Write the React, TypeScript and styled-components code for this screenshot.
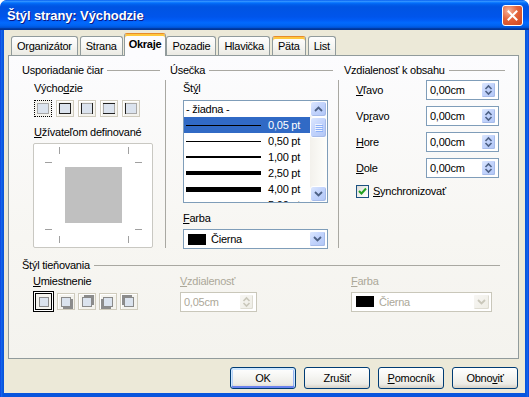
import React from "react";
import styled, { createGlobalStyle, css } from "styled-components";

const Global = createGlobalStyle`
  html, body { margin: 0; padding: 0; background: #ffffff; }
  body { font-family: "Liberation Sans", Arial, sans-serif; font-size: 11px; color: #000; letter-spacing: -0.25px; }
  * { box-sizing: border-box; }
`;

const Window = styled.div`
  width: 529px;
  height: 397px;
  display: flex;
  flex-direction: column;
  background: linear-gradient(to right, #0831d9 0, #166aee 1px, #0855dd 3px, #0855dd calc(100% - 3px), #166aee calc(100% - 1px), #0831d9 100%);
  border-radius: 7px 7px 0 0;
  overflow: hidden;
`;

const TitleBar = styled.div`
  height: 30px;
  flex: none;
  display: flex;
  align-items: center;
  justify-content: space-between;
  padding: 0 6px 0 7px;
  background: linear-gradient(to bottom, #0058ee 0%, #3593ff 4%, #288eff 6%, #127dff 8%, #036ffc 10%, #0262ee 14%, #0057e5 20%, #0054e3 24%, #0055eb 56%, #005bf5 66%, #026afe 76%, #0062ef 86%, #0052d6 92%, #0040ab 94%, #003092 100%);
  border-radius: 7px 7px 0 0;
`;

const Title = styled.div`
  color: #fff;
  font: bold 13px "Liberation Sans", Arial, sans-serif;
  text-shadow: 1px 1px 0 #0a1883;
  letter-spacing: -0.1px;
`;

const CloseButton = styled.div`
  width: 21px;
  height: 21px;
  border: 1px solid #fff;
  border-radius: 3px;
  background: radial-gradient(circle at 30% 25%, #f7b39a 0%, #e4633a 45%, #cc4520 100%);
  display: flex;
  align-items: center;
  justify-content: center;
`;

const Client = styled.div`
  flex: 1;
  margin: 0 4px 4px 4px;
  background: #ece9d8;
  display: flex;
  flex-direction: column;
  padding: 3px 0 0 4px;
`;

const TabStrip = styled.div`
  height: 22px;
  display: flex;
  align-items: flex-end;
  padding-left: 3px;
  position: relative;
  z-index: 1;
`;

const Tab = styled.div<{ $selected?: boolean; $hot?: boolean }>`
  height: 19px;
  padding: 0 5px 0 5px;
  display: flex;
  align-items: center;
  border: 1px solid #919b9c;
  border-bottom: none;
  border-radius: 3px 3px 0 0;
  margin-right: 2px;
  background: linear-gradient(to bottom, #fefefe 0%, #f6f6f3 50%, #ebeae3 100%);
  white-space: nowrap;
  ${(p) =>
    p.$hot &&
    css`
      border-top-color: #e68b2c;
      box-shadow: inset 0 2px 0 #ffc73c;
    `}
  ${(p) =>
    p.$selected &&
    css`
      height: 23px;
      margin-bottom: -1px;
      margin-left: -1px;
      margin-right: 0;
      font-weight: bold;
      padding: 0 4px 2px 4px;
      background: #fcfcfe;
      border-top-color: #e68b2c;
      box-shadow: inset 0 2px 0 #ffc73c;
    `}
`;

const Panel = styled.div`
  width: 511px;
  height: 304px;
  flex: none;
  border: 1px solid #919b9c;
  background: linear-gradient(to bottom, #fcfcfe 0%, #f7f6f2 60%, #f4f3ee 100%);
  padding: 8px 0 0 13px;
  display: flex;
  flex-direction: column;
`;

const TopRow = styled.div`
  display: flex;
  height: 185px;
`;

const Column = styled.div<{ $w: number; $ml?: number }>`
  width: ${(p) => p.$w}px;
  margin-left: ${(p) => p.$ml ?? 0}px;
  display: flex;
  flex-direction: column;
`;

const VSep = styled.div<{ $ml: number }>`
  width: 1px;
  height: 168px;
  margin-top: 16px;
  margin-left: ${(p) => p.$ml}px;
  background: #a9a8a2;
`;

const GroupHeader = styled.div`
  height: 13px;
  display: flex;
  align-items: center;
  gap: 4px;
  line-height: 13px;
  white-space: nowrap;
`;

const Rule = styled.div`
  flex: 1;
  height: 1px;
  background: #a9a8a2;
`;

const GroupBody = styled.div<{ $pl: number }>`
  display: flex;
  flex-direction: column;
  padding-left: ${(p) => p.$pl}px;
`;

const Label = styled.div<{ $mt?: number; $disabled?: boolean }>`
  line-height: 13px;
  height: 13px;
  margin-top: ${(p) => p.$mt ?? 0}px;
  white-space: nowrap;
  color: ${(p) => (p.$disabled ? "#aca899" : "#000")};
`;

const Key = styled.span`
  text-decoration: underline;
  text-underline-offset: 1px;
`;

const PresetRow = styled.div<{ $mt: number }>`
  display: flex;
  align-items: center;
  gap: 4px;
  margin-top: ${(p) => p.$mt}px;
`;

const PresetButton = styled.div<{ $focus?: boolean; $selected?: boolean }>`
  width: 18px;
  height: 17px;
  display: flex;
  align-items: center;
  justify-content: center;
  border: 1px solid #cfcbbd;
  box-shadow: inset 1px 1px 0 #ffffff;
  background: #f4f3ee;
  ${(p) =>
    p.$focus &&
    css`
      border: 1px dotted #000;
      box-shadow: none;
    `}
  ${(p) =>
    p.$selected &&
    css`
      width: 21px;
      height: 21px;
      border: 1px solid #000;
      box-shadow: inset 0 0 0 1px #fff, inset 0 0 0 2px #000;
    `}
`;

const PreviewBox = styled.div`
  width: 120px;
  height: 105px;
  margin: 4px 0 0 -1px;
  background: #fff;
  border: 1px solid #c9c8c2;
  border-radius: 2px;
`;

const ListBox = styled.div`
  width: 145px;
  height: 103px;
  margin-top: 5px;
  border: 1px solid #7f9db9;
  background: #fff;
  display: flex;
  overflow: hidden;
`;

const ListRows = styled.div`
  flex: 1;
  min-width: 0;
  display: flex;
  flex-direction: column;
  overflow: hidden;
`;

const ListRow = styled.div<{ $selected?: boolean }>`
  height: 16px;
  flex: none;
  display: flex;
  align-items: center;
  gap: 7px;
  padding: 0 10px 0 2px;
  white-space: nowrap;
  background: ${(p) => (p.$selected ? "#316ac5" : "transparent")};
  color: ${(p) => (p.$selected ? "#fff" : "#000")};
`;

const LineSample = styled.div<{ $t: number }>`
  flex: 1;
  height: ${(p) => p.$t}px;
  background: #000;
`;

const ScrollBar = styled.div`
  width: 17px;
  flex: none;
  display: flex;
  flex-direction: column;
  background: linear-gradient(to right, #f3f1ec, #fefefb);
`;

const ScrollButton = styled.div<{ $h: number; $mt?: number }>`
  height: ${(p) => p.$h}px;
  margin-top: ${(p) => p.$mt ?? 0}px;
  flex: none;
  border: 1px solid #fff;
  border-radius: 3px;
  background: linear-gradient(135deg, #dce7fe 0%, #c3d4fc 45%, #b1c6f6 100%);
  box-shadow: inset -1px -1px 0 #a6bbe9;
  display: flex;
  align-items: center;
  justify-content: center;
`;

const SelectBox = styled.div<{ $w: number; $mt?: number; $disabled?: boolean }>`
  width: ${(p) => p.$w}px;
  height: 20px;
  margin-top: ${(p) => p.$mt ?? 0}px;
  border: 1px solid ${(p) => (p.$disabled ? "#c9c7ba" : "#7f9db9")};
  background: #fff;
  display: flex;
  align-items: center;
  padding: 1px;
  color: ${(p) => (p.$disabled ? "#aca899" : "#000")};
`;

const Swatch = styled.div`
  width: 18px;
  height: 11px;
  background: #000;
  margin: 0 5px 0 3px;
  flex: none;
`;

const SelectText = styled.div`
  flex: 1;
  white-space: nowrap;
`;

const DropButton = styled.div<{ $disabled?: boolean }>`
  width: 17px;
  height: 16px;
  flex: none;
  border: 1px solid #fff;
  border-radius: 2px;
  display: flex;
  align-items: center;
  justify-content: center;
  background: ${(p) =>
    p.$disabled
      ? "linear-gradient(135deg, #f7f6f3, #eeede5)"
      : "linear-gradient(135deg, #dce7fe 0%, #c3d4fc 45%, #b1c6f6 100%)"};
  box-shadow: inset -1px -1px 0 ${(p) => (p.$disabled ? "#dedcd2" : "#a6bbe9")};
`;

const SpinRow = styled.div<{ $mt: number }>`
  display: flex;
  align-items: center;
  height: 20px;
  margin-top: ${(p) => p.$mt}px;
`;

const SpinLabel = styled.div`
  width: 70px;
  line-height: 13px;
  white-space: nowrap;
`;

const SpinField = styled.div<{ $w: number; $disabled?: boolean }>`
  width: ${(p) => p.$w}px;
  height: 20px;
  border: 1px solid ${(p) => (p.$disabled ? "#c9c7ba" : "#7f9db9")};
  background: #fff;
  display: flex;
  align-items: center;
  padding: 1px 2px 1px 3px;
  color: ${(p) => (p.$disabled ? "#aca899" : "#000")};
`;

const SpinText = styled.div`
  flex: 1;
  white-space: nowrap;
`;

const SpinButtons = styled.div<{ $disabled?: boolean }>`
  width: 15px;
  height: 16px;
  border: 1px solid #fff;
  border-radius: 2px;
  display: flex;
  align-items: center;
  justify-content: center;
  background: ${(p) =>
    p.$disabled
      ? "linear-gradient(135deg, #f7f6f3, #eeede5)"
      : "linear-gradient(135deg, #dce7fe 0%, #c3d4fc 45%, #b1c6f6 100%)"};
  box-shadow: inset -1px -1px 0 ${(p) => (p.$disabled ? "#dedcd2" : "#a6bbe9")};
`;

const CheckRow = styled.div`
  display: flex;
  align-items: center;
  gap: 4px;
  margin-top: 7px;
  height: 13px;
  line-height: 13px;
`;

const CheckBox = styled.div`
  width: 13px;
  height: 13px;
  border: 1px solid #1c5180;
  background: linear-gradient(135deg, #dcdcd7 0%, #f4f4f0 60%, #ffffff 100%);
  display: flex;
  align-items: center;
  justify-content: center;
`;

const ShadowSection = styled.div`
  margin-top: 10px;
  width: 478px;
  display: flex;
  flex-direction: column;
`;

const ShadowGrid = styled.div`
  display: grid;
  grid-template-columns: 147px 171px 141px;
  padding-left: 11px;
  margin-top: 3px;
`;

const ShadowCell = styled.div`
  display: flex;
  flex-direction: column;
  gap: 3px;
`;

const ShadowRow = styled.div`
  display: flex;
  align-items: center;
  gap: 3px;
  height: 21px;
`;

const ButtonRow = styled.div`
  display: flex;
  justify-content: flex-end;
  gap: 8px;
  margin-top: 8px;
  padding-right: 7px;
`;

const DialogButton = styled.div<{ $default?: boolean }>`
  width: 66px;
  height: 22px;
  border: 1px solid #003c74;
  border-radius: 3px;
  background: linear-gradient(to bottom, #ffffff 0%, #f6f6f3 40%, #ecebe6 80%, #d6d0c5 100%);
  display: flex;
  align-items: center;
  justify-content: center;
  white-space: nowrap;
  ${(p) =>
    p.$default &&
    css`
      box-shadow: inset 0 1px 0 1px #cee7ff, inset 0 -1px 0 1px #6982ee, inset 1px 0 0 1px #b8d3f7, inset -1px 0 0 1px #97b3f0;
    `}
`;

/* ---------- drawings ---------- */

const CloseIcon = () => (
  <svg width="13" height="13" viewBox="0 0 13 13">
    <path d="M2.5 2.5 L10.5 10.5 M10.5 2.5 L2.5 10.5" stroke="#fff" strokeWidth="2" strokeLinecap="square" />
  </svg>
);

type Sides = { t?: boolean; r?: boolean; b?: boolean; l?: boolean };

const BorderIcon = ({ t, r, b, l }: Sides) => (
  <svg width="12" height="11" viewBox="0 0 12 11">
    <rect x="0.5" y="0.5" width="11" height="10" fill="#dbe3ee" stroke="#a8a8a8" />
    {t && <line x1="0" y1="0.5" x2="12" y2="0.5" stroke="#222" />}
    {b && <line x1="0" y1="10.5" x2="12" y2="10.5" stroke="#222" />}
    {l && <line x1="0.5" y1="0" x2="0.5" y2="11" stroke="#222" />}
    {r && <line x1="11.5" y1="0" x2="11.5" y2="11" stroke="#222" />}
  </svg>
);

const ShadowIcon = ({ dx, dy }: { dx: number; dy: number }) => (
  <svg width="14" height="14" viewBox="0 0 14 14">
    {(dx !== 0 || dy !== 0) && <rect x={2 + dx} y={2 + dy} width="10" height="10" fill="#8c8c8c" />}
    <rect x="2.5" y="2.5" width="9" height="9" fill="#dbe3ee" stroke="#8a8a8a" />
  </svg>
);

const PreviewDrawing = () => (
  <svg width="118" height="103" viewBox="0 0 118 103">
    <rect x="31" y="23" width="57" height="56" fill="#c0c0c0" />
    <g stroke="#a0a0a0" strokeWidth="1">
      <line x1="25.5" y1="3" x2="25.5" y2="10" />
      <line x1="94.5" y1="3" x2="94.5" y2="10" />
      <line x1="25.5" y1="92" x2="25.5" y2="99" />
      <line x1="94.5" y1="92" x2="94.5" y2="99" />
      <line x1="11" y1="18.5" x2="18" y2="18.5" />
      <line x1="101" y1="18.5" x2="108" y2="18.5" />
      <line x1="11" y1="85.5" x2="18" y2="85.5" />
      <line x1="101" y1="85.5" x2="108" y2="85.5" />
    </g>
  </svg>
);

const Chevron = ({ up, color = "#4d6185" }: { up?: boolean; color?: string }) => (
  <svg width="9" height="6" viewBox="0 0 9 6">
    <polyline
      points={up ? "1,5 4.5,1.5 8,5" : "1,1 4.5,4.5 8,1"}
      fill="none"
      stroke={color}
      strokeWidth="1.8"
    />
  </svg>
);

const SpinArrows = ({ color = "#4d6185" }: { color?: string }) => (
  <svg width="9" height="12" viewBox="0 0 9 12">
    <polyline points="1.5,5 4.5,2 7.5,5" fill="none" stroke={color} strokeWidth="1.6" />
    <polyline points="1.5,7 4.5,10 7.5,7" fill="none" stroke={color} strokeWidth="1.6" />
  </svg>
);

const Grip = () => (
  <svg width="8" height="8" viewBox="0 0 8 8">
    <g stroke="#eef3fe">
      <line x1="0" y1="0.5" x2="7" y2="0.5" />
      <line x1="0" y1="2.5" x2="7" y2="2.5" />
      <line x1="0" y1="4.5" x2="7" y2="4.5" />
      <line x1="0" y1="6.5" x2="7" y2="6.5" />
    </g>
    <g stroke="#8cb0f8">
      <line x1="1" y1="1.5" x2="8" y2="1.5" />
      <line x1="1" y1="3.5" x2="8" y2="3.5" />
      <line x1="1" y1="5.5" x2="8" y2="5.5" />
      <line x1="1" y1="7.5" x2="8" y2="7.5" />
    </g>
  </svg>
);

const CheckMark = () => (
  <svg width="9" height="9" viewBox="0 0 9 9">
    <polyline points="1,4 3.5,6.5 8,1.5" fill="none" stroke="#21a121" strokeWidth="2" />
  </svg>
);

/* ---------- data ---------- */

const tabs = [
  { label: "Organizátor" },
  { label: "Strana" },
  { label: "Okraje", selected: true },
  { label: "Pozadie" },
  { label: "Hlavička" },
  { label: "Päta", hot: true },
  { label: "List" },
];

const borderPresets: Sides[] = [
  {},
  { t: true, r: true, b: true, l: true },
  { l: true, r: true },
  { t: true, b: true },
  { l: true },
];

const lineStyles = [
  { label: "- žiadna -", t: 0 },
  { label: "0,05 pt", t: 1, selected: true },
  { label: "0,50 pt", t: 1 },
  { label: "1,00 pt", t: 2 },
  { label: "2,50 pt", t: 4 },
  { label: "4,00 pt", t: 5 },
  { label: "5,00 pt", t: 6 },
];

const spacing: { key: string; pre: string; post: string }[] = [
  { pre: "", key: "V", post: "ľavo" },
  { pre: "Vp", key: "r", post: "avo" },
  { pre: "", key: "H", post: "ore" },
  { pre: "", key: "D", post: "ole" },
];

const shadowPresets = [
  { dx: 0, dy: 0, selected: true },
  { dx: 2, dy: 2 },
  { dx: 2, dy: -2 },
  { dx: -2, dy: 2 },
  { dx: -2, dy: -2 },
];

export default function App() {
  return (
    <>
      <Global />
      <Window>
        <TitleBar>
          <Title>Štýl strany: Východzie</Title>
          <CloseButton>
            <CloseIcon />
          </CloseButton>
        </TitleBar>
        <Client>
          <TabStrip>
            {tabs.map((t) => (
              <Tab key={t.label} $selected={t.selected} $hot={t.hot}>
                {t.label}
              </Tab>
            ))}
          </TabStrip>
          <Panel>
            <TopRow>
              <Column $w={138}>
                <GroupHeader>
                  Usporiadanie čiar
                  <Rule />
                </GroupHeader>
                <GroupBody $pl={12}>
                  <Label $mt={5}>
                    Výcho<Key>d</Key>zie
                  </Label>
                  <PresetRow $mt={5}>
                    {borderPresets.map((s, i) => (
                      <PresetButton key={i} $focus={i === 0}>
                        <BorderIcon {...s} />
                      </PresetButton>
                    ))}
                  </PresetRow>
                  <Label $mt={9}>
                    <Key>U</Key>žívateľom definované
                  </Label>
                  <PreviewBox>
                    <PreviewDrawing />
                  </PreviewBox>
                </GroupBody>
              </Column>
              <VSep $ml={5} />
              <Column $w={163} $ml={4}>
                <GroupHeader>
                  Úsečka
                  <Rule />
                </GroupHeader>
                <GroupBody $pl={13}>
                  <Label $mt={5}>
                    Št<Key>ý</Key>l
                  </Label>
                  <ListBox>
                    <ListRows>
                      {lineStyles.map((l) => (
                        <ListRow key={l.label} $selected={l.selected}>
                          {l.t > 0 && <LineSample $t={l.t} />}
                          <span>{l.label}</span>
                        </ListRow>
                      ))}
                    </ListRows>
                    <ScrollBar>
                      <ScrollButton $h={16}>
                        <Chevron up />
                      </ScrollButton>
                      <ScrollButton $h={21}>
                        <Grip />
                      </ScrollButton>
                      <ScrollButton $h={16} $mt={48}>
                        <Chevron />
                      </ScrollButton>
                    </ScrollBar>
                  </ListBox>
                  <Label $mt={9}>
                    <Key>F</Key>arba
                  </Label>
                  <SelectBox $w={145} $mt={4}>
                    <Swatch />
                    <SelectText>Čierna</SelectText>
                    <DropButton>
                      <Chevron />
                    </DropButton>
                  </SelectBox>
                </GroupBody>
              </Column>
              <VSep $ml={5} />
              <Column $w={161} $ml={5}>
                <GroupHeader>
                  Vzdialenosť k obsahu
                  <Rule />
                </GroupHeader>
                <GroupBody $pl={12}>
                  {spacing.map((s, i) => (
                    <SpinRow key={i} $mt={i === 0 ? 3 : 6}>
                      <SpinLabel>
                        {s.pre}
                        <Key>{s.key}</Key>
                        {s.post}
                      </SpinLabel>
                      <SpinField $w={73}>
                        <SpinText>0,00cm</SpinText>
                        <SpinButtons>
                          <SpinArrows />
                        </SpinButtons>
                      </SpinField>
                    </SpinRow>
                  ))}
                  <CheckRow>
                    <CheckBox>
                      <CheckMark />
                    </CheckBox>
                    <span>
                      <Key>S</Key>ynchronizovať
                    </span>
                  </CheckRow>
                </GroupBody>
              </Column>
            </TopRow>
            <ShadowSection>
              <GroupHeader>
                Štýl tieňovania
                <Rule />
              </GroupHeader>
              <ShadowGrid>
                <ShadowCell>
                  <Label>
                    <Key>U</Key>miestnenie
                  </Label>
                  <ShadowRow>
                    {shadowPresets.map((s, i) => (
                      <PresetButton key={i} $selected={s.selected}>
                        <ShadowIcon dx={s.dx} dy={s.dy} />
                      </PresetButton>
                    ))}
                  </ShadowRow>
                </ShadowCell>
                <ShadowCell>
                  <Label $disabled>
                    <Key>V</Key>zdialenosť
                  </Label>
                  <ShadowRow>
                    <SpinField $w={77} $disabled>
                      <SpinText>0,05cm</SpinText>
                      <SpinButtons $disabled>
                        <SpinArrows color="#c9c7ba" />
                      </SpinButtons>
                    </SpinField>
                  </ShadowRow>
                </ShadowCell>
                <ShadowCell>
                  <Label $disabled>
                    <Key>F</Key>arba
                  </Label>
                  <ShadowRow>
                    <SelectBox $w={141} $disabled>
                      <Swatch />
                      <SelectText>Čierna</SelectText>
                      <DropButton $disabled>
                        <Chevron color="#c9c7ba" />
                      </DropButton>
                    </SelectBox>
                  </ShadowRow>
                </ShadowCell>
              </ShadowGrid>
            </ShadowSection>
          </Panel>
          <ButtonRow>
            <DialogButton $default>OK</DialogButton>
            <DialogButton>Zrušiť</DialogButton>
            <DialogButton>
              <Key>P</Key>omocník
            </DialogButton>
            <DialogButton>
              Obno<Key>v</Key>iť
            </DialogButton>
          </ButtonRow>
        </Client>
      </Window>
    </>
  );
}
